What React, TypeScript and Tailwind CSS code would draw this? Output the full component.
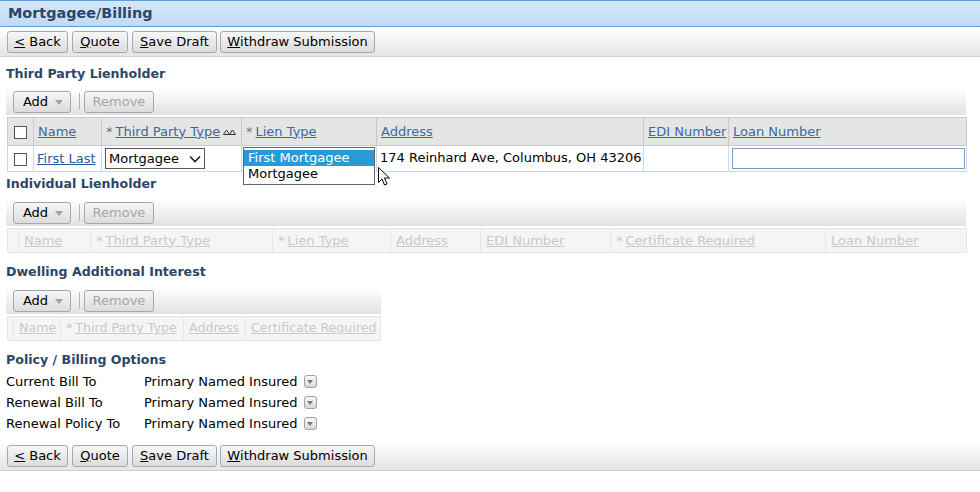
import React from 'react';

const BTN =
  'h-[22px] border border-[#a3a9b1] rounded-[3px] bg-gradient-to-b from-[#f7f7f7] to-[#dcdcdc] text-[13px] flex items-center justify-center';

const ActionBar: React.FC = () => (
  <div className="h-[30px] bg-gradient-to-b from-white to-[#e5e5e5] border-b border-[#cfcfcf] flex items-center gap-[3px] pl-[7px]">
    <button className={`${BTN} text-black w-[61px]`}>
      <span className="underline">&lt;</span>&nbsp;Back
    </button>
    <button className={`${BTN} text-black w-[56px] ml-[1px]`}>
      <span className="underline">Q</span>uote
    </button>
    <button className={`${BTN} text-black w-[85px] ml-[1px]`}>
      <span className="underline">S</span>ave Draft
    </button>
    <button className={`${BTN} text-black w-[155px]`}>
      <span className="underline">W</span>ithdraw Submission
    </button>
  </div>
);

const ListToolbar: React.FC<{ width: string }> = ({ width }) => (
  <div className={`${width} ml-[6px] h-[27px] bg-gradient-to-b from-white to-[#e2e2e2] flex items-center pl-[7px]`}>
    <button className={`${BTN} text-black w-[58px] h-[21px] gap-[7px] pl-[2px]`}>
      Add
      <span className="w-0 h-0 border-l-[4px] border-r-[4px] border-t-[5px] border-l-transparent border-r-transparent border-t-[#9aa3ad] mt-[2px]" />
    </button>
    <span className="w-px h-[17px] bg-[#b3b3b3] ml-[8px] mr-[4px]" />
    <button className={`${BTN} w-[70px] h-[21px] text-[#a5a5a5]`}>Remove</button>
  </div>
);

const SectionTitle: React.FC<{ children: React.ReactNode; mt: string }> = ({ children, mt }) => (
  <div className={`${mt} h-[18px] px-[6px] flex items-center font-bold text-[12.6px] text-[#2d4566]`}>{children}</div>
);

const Req = () => <span className="text-[#777] mr-[3px]">*</span>;

const SortIcon = () => (
  <svg width="13" height="6" viewBox="0 0 13 6" className="ml-[3px] inline-block">
    <path d="M0.5 5.5 L3.5 1 L6.5 5.5 Z M6.5 5.5 L9.5 1 L12.5 5.5 Z" fill="none" stroke="#333" strokeWidth="1" />
  </svg>
);

const Check = () => <span className="inline-block w-[13px] h-[13px] border border-[#555] bg-white align-middle" />;

const DisabledHeader: React.FC<{
  cols: { w: string; label: string; req?: boolean }[];
  width: string;
  first: string;
  size?: string;
}> = ({ cols, width, first, size = 'text-[13px]' }) => (
  <div
    className={`${width} ${size} ml-[7px] mt-[2px] h-[25px] flex bg-[#f5f5f5] border border-[#e6e6e6] text-[#c9c9c9] overflow-hidden`}
  >
    <div className={`${first} shrink-0 border-r border-[#e6e6e6]`} />
    {cols.map((c, i) => (
      <div
        key={i}
        className={`${c.w} shrink-0 px-[5px] flex items-center border-r border-[#e6e6e6] last:border-r-0 whitespace-nowrap`}
      >
        {c.req && <span className="mr-[3px]">*</span>}
        <span className="underline">{c.label}</span>
      </div>
    ))}
  </div>
);

const App: React.FC = () => {
  return (
    <div
      className="w-[980px] h-[492px] overflow-hidden bg-white text-[13px] text-black relative"
      style={{ fontFamily: '"DejaVu Sans", Verdana, sans-serif' }}
    >
      <div className="h-[27px] border-y border-[#5d9fd6] bg-gradient-to-b from-[#d3e7fa] to-[#c1dbf4] px-[8px] flex items-center font-bold text-[14.4px] text-[#2d4566]">
        Mortgagee/Billing
      </div>
      <ActionBar />

      <SectionTitle mt="mt-[8px]">Third Party Lienholder</SectionTitle>
      <div className="mt-[5px]">
        <ListToolbar width="w-[960px]" />
      </div>

      <div className="relative ml-[7px] mt-[2px] w-[960px]">
        <table className="border-collapse w-[960px] table-fixed">
          <colgroup>
            <col className="w-[26px]" />
            <col className="w-[68px]" />
            <col className="w-[140px]" />
            <col className="w-[135px]" />
            <col className="w-[267px]" />
            <col className="w-[85px]" />
            <col />
          </colgroup>
          <thead>
            <tr className="h-[28px] bg-[#e5e5e5] text-[#3d6a9c]">
              <th className="border border-[#c9c9c9] text-center">
                <Check />
              </th>
              <th className="border border-[#c9c9c9] text-left font-normal px-[4px]">
                <span className="underline">Name</span>
              </th>
              <th className="border border-[#c9c9c9] text-left font-normal px-[4px] whitespace-nowrap">
                <Req />
                <span className="underline">Third Party Type</span>
                <SortIcon />
              </th>
              <th className="border border-[#c9c9c9] text-left font-normal px-[4px]">
                <Req />
                <span className="underline">Lien Type</span>
              </th>
              <th className="border border-[#c9c9c9] text-left font-normal px-[4px]">
                <span className="underline">Address</span>
              </th>
              <th className="border border-[#c9c9c9] text-left font-normal px-[4px] whitespace-nowrap">
                <span className="underline">EDI Number</span>
              </th>
              <th className="border border-[#c9c9c9] text-left font-normal px-[4px]">
                <span className="underline">Loan Number</span>
              </th>
            </tr>
          </thead>
          <tbody>
            <tr className="h-[26px]">
              <td className="border border-[#c8d9ea] text-center">
                <Check />
              </td>
              <td className="border border-[#c8d9ea] px-[3px] text-[#1f5b9c] underline whitespace-nowrap">First Last</td>
              <td className="border border-[#c8d9ea] px-[3px]">
                <div className="w-[100px] h-[21px] border border-[#555] flex items-center justify-between px-[3px]">
                  Mortgagee
                  <svg width="12" height="8" viewBox="0 0 12 8">
                    <path d="M1 1.5 L6 6.5 L11 1.5" fill="none" stroke="#222" strokeWidth="1.6" />
                  </svg>
                </div>
              </td>
              <td className="border border-[#c8d9ea]" />
              <td className="border border-[#c8d9ea] px-[3px] align-top pt-[2px] whitespace-nowrap">
                174 Reinhard Ave, Columbus, OH 43206
              </td>
              <td className="border border-[#c8d9ea]" />
              <td className="border border-[#c8d9ea] px-[3px]">
                <div className="w-[233px] h-[21px] border border-[#7f9db9] bg-white" />
              </td>
            </tr>
          </tbody>
        </table>

        {/* open lien type dropdown */}
        <div className="absolute left-[236px] top-[30px] w-[132px] border border-[#646464] bg-white leading-[16px] py-[2px]">
          <div className="bg-[#2a9ad7] text-white px-[4px]">First Mortgagee</div>
          <div className="px-[4px]">Mortgagee</div>
        </div>
        <svg className="absolute left-[371px] top-[50px]" width="13" height="20" viewBox="0 0 13 20">
          <path d="M0.5 0.5 L0.5 15.5 L4 12 L6.5 18 L9 17 L6.5 11 L11.5 11 Z" fill="white" stroke="#000" strokeWidth="1" />
        </svg>
      </div>

      <SectionTitle mt="mt-[3px]">Individual Lienholder</SectionTitle>
      <div className="mt-[6px]">
        <ListToolbar width="w-[960px]" />
      </div>
      <DisabledHeader
        width="w-[960px]"
        first="w-[11px]"
        cols={[
          { w: 'w-[72px]', label: 'Name' },
          { w: 'w-[182px]', label: 'Third Party Type', req: true },
          { w: 'w-[118px]', label: 'Lien Type', req: true },
          { w: 'w-[90px]', label: 'Address' },
          { w: 'w-[130px]', label: 'EDI Number' },
          { w: 'w-[215px]', label: 'Certificate Required', req: true },
          { w: 'flex-1', label: 'Loan Number' },
        ]}
      />

      <SectionTitle mt="mt-[10px]">Dwelling Additional Interest</SectionTitle>
      <div className="mt-[6px]">
        <ListToolbar width="w-[375px]" />
      </div>
      <DisabledHeader
        width="w-[374px]"
        first="w-[6px]"
        size="text-[12.6px]"
        cols={[
          { w: 'w-[47px]', label: 'Name' },
          { w: 'w-[123px]', label: 'Third Party Type', req: true },
          { w: 'w-[62px]', label: 'Address' },
          { w: 'flex-1', label: 'Certificate Required' },
        ]}
      />

      <SectionTitle mt="mt-[10px]">Policy / Billing Options</SectionTitle>
      <div className="px-[6px] mt-[2px]">
        {['Current Bill To', 'Renewal Bill To', 'Renewal Policy To'].map((label) => (
          <div key={label} className="h-[21px] flex items-center">
            <span className="w-[138px] mt-[1px]">{label}</span>
            <span>Primary Named Insured</span>
            <span className="ml-[6px] w-[13px] h-[13px] rounded-[3px] border border-[#9aa0a8] bg-gradient-to-b from-[#fafafa] to-[#d8d8d8] flex items-center justify-center">
              <span className="w-0 h-0 border-l-[3px] border-r-[3px] border-t-[4px] border-l-transparent border-r-transparent border-t-[#6f7a86]" />
            </span>
          </div>
        ))}
      </div>

      <div className="mt-[7px]">
        <ActionBar />
      </div>
    </div>
  );
};

export default App;
